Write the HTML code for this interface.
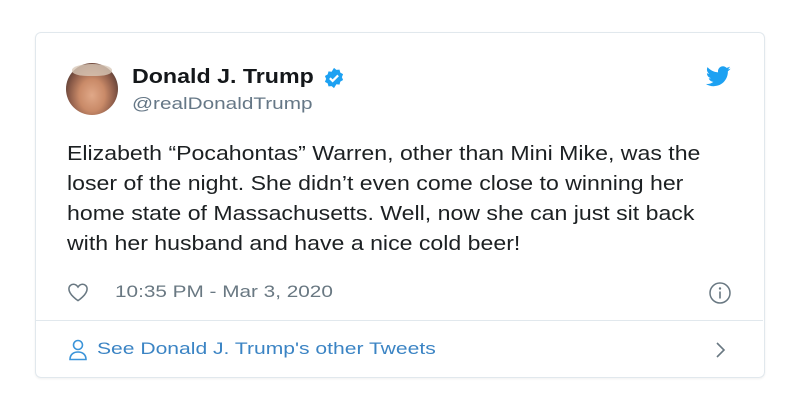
<!DOCTYPE html>
<html><head><style>
body{margin:0;width:799px;height:414px;background:#fff;font-family:"Liberation Sans",sans-serif;position:relative;overflow:hidden}
.card{position:absolute;left:35px;top:32px;width:728px;height:344px;border:1px solid #e1e8ed;border-radius:6px;box-shadow:0 1px 2px rgba(0,0,0,.06)}
.abs{position:absolute;white-space:nowrap}
.sx{transform-origin:0 0}
</style></head><body>
<div class="card"></div>
<div class="abs" style="left:66px;top:63px;width:52px;height:52px;border-radius:50%;background:radial-gradient(ellipse at 50% 62%,#e0a888 0,#c98a68 35%,#8a5a48 62%,#4a3530 85%,#c8d8e0 100%)"></div>
<div class="abs" style="left:72px;top:64px;width:40px;height:12px;border-radius:50% 50% 40% 40%;background:#d8c8b8;opacity:.8"></div>
<div class="abs sx" style="left:132px;top:66px;font-size:20px;font-weight:bold;color:#14171a;transform:scaleX(1.16)">Donald J. Trump</div>
<svg class="abs" style="left:323px;top:67px" width="22" height="22" viewBox="0 0 24 24"><path fill="#1da1f2" d="M12 1l2.6 2.2 3.4-.4.9 3.3 3 1.7-1.3 3.2 1.3 3.2-3 1.7-.9 3.3-3.4-.4L12 23l-2.6-2.2-3.4.4-.9-3.3-3-1.7L3.4 13 2.1 9.8l3-1.7.9-3.3 3.4.4z"/><path d="M7.5 12.2l3 3 6-6" stroke="#fff" stroke-width="2.4" fill="none"/></svg>
<div class="abs sx" style="left:132px;top:94px;font-size:17px;color:#657786;transform:scaleX(1.22)">@realDonaldTrump</div>
<svg class="abs" style="left:706px;top:66px" width="25" height="21" viewBox="0 0 24 20"><path fill="#1da1f2" d="M23.6 2.4c-.9.4-1.8.6-2.8.8 1-.6 1.8-1.600 2.1-2.7-.9.6-2 1-3.1 1.2C18.9.7 17.6.1 16.3.1c-2.7 0-4.8 2.2-4.8 4.8 0 .4 0 .8.1 1.1C7.5 5.8 3.9 3.9 1.5 1 1.1 1.7.9 2.5.9 3.4c0 1.7.9 3.2 2.2 4-.8 0-1.5-.2-2.2-.6v.1c0 2.3 1.7 4.3 3.9 4.7-.4.1-.8.2-1.3.2-.3 0-.6 0-.9-.1.6 1.900 2.4 3.300 4.500 3.4-1.700 1.300-3.700 2.100-6 2.100-.4 0-.8 0-1.200-.1 2.100 1.400 4.700 2.200 7.400 2.200 8.900 0 13.700-7.400 13.700-13.700v-.6c.9-.7 1.800-1.500 2.500-2.500z"/></svg>
<div class="abs sx" style="left:67px;top:139px;font-size:20px;line-height:30px;color:#1c2022;transform:scaleX(1.155)">Elizabeth “Pocahontas” Warren, other than Mini Mike, was the<br>loser of the night. She didn’t even come close to winning her<br>home state of Massachusetts. Well, now she can just sit back<br>with her husband and have a nice cold beer!</div>
<svg class="abs" style="left:67px;top:282px" width="22" height="20" viewBox="0 0 24 22"><path d="M12 20.5S2 14 2 7.5C2 4.5 4.3 2.5 7 2.5c2.2 0 3.8 1.3 5 3 1.2-1.7 2.8-3 5-3 2.7 0 5 2 5 5C22 14 12 20.5 12 20.5z" fill="none" stroke="#697882" stroke-width="1.7"/></svg>
<div class="abs sx" style="left:115px;top:282px;font-size:17px;color:#697882;transform:scaleX(1.22)">10:35 PM - Mar 3, 2020</div>
<svg class="abs" style="left:708px;top:281px" width="24" height="24" viewBox="0 0 24 24"><circle cx="12" cy="12" r="10" fill="none" stroke="#697882" stroke-width="1.5"/><circle cx="12" cy="7.5" r="1.2" fill="#697882"/><path d="M12 10.5v7" stroke="#697882" stroke-width="1.6"/></svg>
<div class="abs" style="left:36px;top:320px;width:727px;height:1px;background:#e1e8ed"></div>
<svg class="abs" style="left:68px;top:338px" width="20" height="24" viewBox="0 0 20 24"><circle cx="10" cy="7" r="4.5" fill="none" stroke="#3b94d9" stroke-width="1.6"/><path d="M2 21.5c0-5 3.5-7.5 8-7.5s8 2.5 8 7.5z" fill="none" stroke="#3b94d9" stroke-width="1.6"/></svg>
<div class="abs sx" style="left:97px;top:339px;font-size:17px;color:#3b84c4;transform:scaleX(1.24)">See Donald J. Trump's other Tweets</div>
<svg class="abs" style="left:713px;top:340px" width="14" height="20" viewBox="0 0 14 20"><path d="M4 3l7 7-7 7" fill="none" stroke="#697882" stroke-width="1.6"/></svg>
</body></html>
